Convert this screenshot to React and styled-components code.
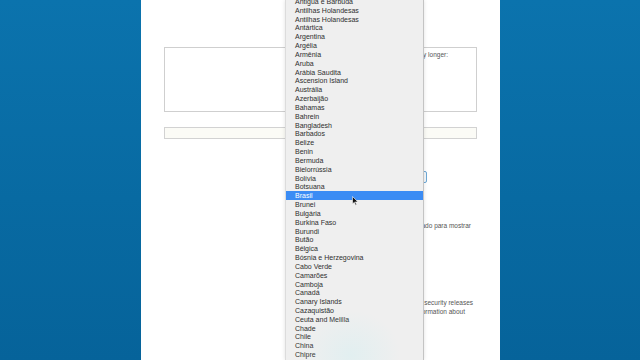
import React from 'react';
import styled, { createGlobalStyle } from 'styled-components';

const GlobalStyle = createGlobalStyle`
    html, body {
        margin: 0;
        padding: 0;
        width: 640px;
        height: 360px;
        overflow: hidden;
    }
    body {
        font-family: 'Liberation Sans', Arial, sans-serif;
        background: linear-gradient(180deg, #0b73ad 0%, #086aa2 55%, #06639a 100%);
    }
`;

const Page = styled.div`
    position: relative;
    box-sizing: border-box;
    width: 359px;
    height: 360px;
    margin: 0 0 0 141px;
    padding: 47px 23px 0 23px;
    background: #ffffff;
    display: flex;
    flex-direction: column;
    color: #555;
    font-size: 6.5px;
    overflow: hidden;
`;

const TextBox = styled.div`
    box-sizing: border-box;
    height: 65px;
    border: 1px solid #cfcfcf;
    padding: 2px 28px 0 130px;
    display: flex;
    justify-content: flex-end;
    align-items: flex-start;
    white-space: nowrap;
    overflow: hidden;
    line-height: 9px;
    span {
        flex-shrink: 0;
    }
`;

const Field = styled.div`
    box-sizing: border-box;
    height: 12px;
    margin-top: 15px;
    border: 1px solid #d2d2d2;
    background: #fbfbf6;
`;

const BtnRow = styled.div`
    display: flex;
    justify-content: flex-end;
    padding-right: 50px;
    margin-top: 32px;
`;

const Btn = styled.div`
    box-sizing: border-box;
    width: 90px;
    height: 12px;
    border: 1px solid #6da8d6;
    border-radius: 2px;
    background: #f4f8fb;
`;

const Line = styled.div`
    display: flex;
    justify-content: flex-end;
    white-space: nowrap;
    overflow: hidden;
    line-height: 9px;
    margin-left: 130px;
    margin-top: ${(p) => p.top || 0}px;
    padding-right: ${(p) => p.pr || 0}px;
    span {
        flex-shrink: 0;
    }
`;

const Menu = styled.div`
    position: absolute;
    left: 144px;
    top: 0;
    width: 139px;
    height: 360px;
    box-sizing: border-box;
    background: #efefef;
    border-left: 1px solid #dcdcdc;
    border-right: 1px solid #c4c4c4;
    box-shadow: 0 0 4px rgba(0, 0, 0, 0.12);
    overflow: hidden;
`;

const List = styled.div`
    margin-top: -3px;
    display: flex;
    flex-direction: column;
`;

const Item = styled.div`
    height: 8.84px;
    line-height: 9.4px;
    padding-left: 9px;
    font-size: 7px;
    white-space: nowrap;
    color: ${(p) => (p.active ? '#ffffff' : '#2e2e2e')};
    background: ${(p) => (p.active ? '#3b8cf4' : 'transparent')};
`;

const Halo = styled.div`
    position: absolute;
    left: 160px;
    top: 310px;
    width: 100px;
    height: 90px;
    border-radius: 50%;
    background: radial-gradient(ellipse, rgba(200, 238, 242, 0.35) 0%, rgba(210, 242, 246, 0) 70%);
    pointer-events: none;
`;

const Cursor = styled.svg`
    position: absolute;
    left: 211px;
    top: 196px;
`;

const countries = [
    'Antigua e Barbuda',
    'Antilhas Holandesas',
    'Antilhas Holandesas',
    'Antártica',
    'Argentina',
    'Argélia',
    'Armênia',
    'Aruba',
    'Arábia Saudita',
    'Ascension Island',
    'Austrália',
    'Azerbaijão',
    'Bahamas',
    'Bahrein',
    'Bangladesh',
    'Barbados',
    'Belize',
    'Benin',
    'Bermuda',
    'Bielorrússia',
    'Bolívia',
    'Botsuana',
    'Brasil',
    'Brunei',
    'Bulgária',
    'Burkina Faso',
    'Burundi',
    'Butão',
    'Bélgica',
    'Bósnia e Herzegovina',
    'Cabo Verde',
    'Camarões',
    'Camboja',
    'Canadá',
    'Canary Islands',
    'Cazaquistão',
    'Ceuta and Melilla',
    'Chade',
    'Chile',
    'China',
    'Chipre',
];

const App = () => {
    return (
        <>
            <GlobalStyle />
            <Page>
                <TextBox>
                    <span>Tell us why you do not need this account any longer:</span>
                </TextBox>
                <Field />
                <BtnRow>
                    <Btn />
                </BtnRow>
                <Line top={38} pr={6}>
                    <span>Selecione o país do qual você é cidadão ou o país que você tem usado para mostrar</span>
                </Line>
                <Line top={68} pr={4}>
                    <span>Keep me up to date with the latest news and important security releases</span>
                </Line>
                <Line pr={12}>
                    <span>and send me other Dropbox information about</span>
                </Line>
                <Menu>
                    <List>
                        {countries.map((c, i) => (
                            <Item key={i} active={c === 'Brasil'}>
                                {c}
                            </Item>
                        ))}
                    </List>
                </Menu>
                <Halo />
                <Cursor width="7" height="10" viewBox="0 0 7 10">
                    <path d="M0.5 0.5 L0.5 8 L2.3 6.3 L3.6 9.3 L4.7 8.8 L3.4 5.9 L6 5.9 Z" fill="#111" stroke="#fff" strokeWidth="0.6" />
                </Cursor>
            </Page>
        </>
    );
};

export default App;
